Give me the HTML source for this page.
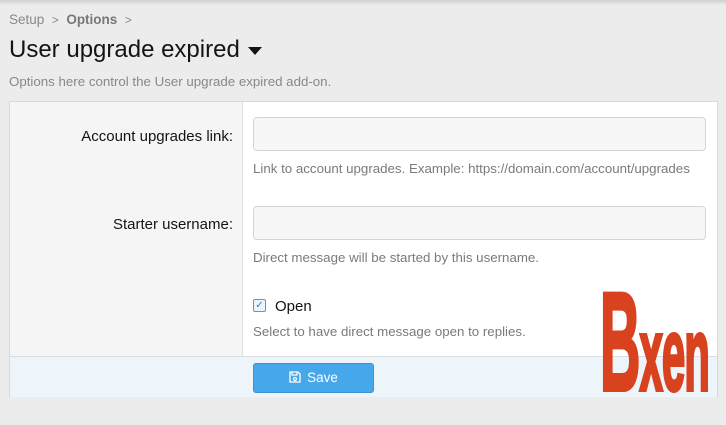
<!DOCTYPE html>
<html><head><style>
body{margin:0;width:726px;height:408px;overflow:hidden;background:#ececec;font-family:"Liberation Sans",Arial,sans-serif;position:relative}
.top{position:absolute;left:0;top:0;width:726px;height:5px;background:linear-gradient(#cfcfcf,#ececec)}
.a{position:absolute}
.panel{position:absolute;left:9px;top:101px;width:707px;height:294px;border:1px solid #d8d8d8;background:#fff}
.left{position:absolute;left:0;top:0;width:232px;height:254px;background:#f5f5f5;border-right:1px solid #e0e0e0}
.foot{position:absolute;left:0;top:254px;width:707px;height:40px;background:#edf4fa;border-top:1px solid #d6dde3}
.lbl{position:absolute;right:484px;font-size:15px;color:#141414;text-align:right}
.inp{position:absolute;left:243px;width:451px;height:32px;border:1px solid #d5d5d5;border-radius:4px;background:#f7f7f7}
.hint{position:absolute;left:243px;font-size:13.3px;color:#7a7a7a}
</style></head><body>
<div class="top"></div>
<div class="a" style="left:9px;top:12px;font-size:13.5px;color:#888">Setup&nbsp;&nbsp;<span style="font-size:12px">&gt;</span>&nbsp;&nbsp;<b style="color:#777">Options</b>&nbsp;&nbsp;<span style="font-size:12px">&gt;</span></div>
<div class="a" style="left:9px;top:36px;font-size:24px;color:#141414">User upgrade expired <span style="display:inline-block;width:0;height:0;border-left:7px solid transparent;border-right:7px solid transparent;border-top:8px solid #141414;vertical-align:middle;margin-left:2px"></span></div>
<div class="a" style="left:9px;top:74px;font-size:13.3px;color:#888">Options here control the User upgrade expired add-on.</div>
<div class="panel">
<div class="left"></div>
<div class="lbl" style="top:26px">Account upgrades link:</div>
<div class="inp" style="top:15px"></div>
<div class="hint" style="top:59px">Link to account upgrades. Example: https://domain.com/account/upgrades</div>
<div class="lbl" style="top:114px">Starter username:</div>
<div class="inp" style="top:104px"></div>
<div class="hint" style="top:148px">Direct message will be started by this username.</div>
<div class="a" style="left:243px;top:197px;width:11px;height:11px;border:1px solid #4a9fd8;border-radius:2px;background:#eaf4fc;font-size:10px;color:#2d82c0;line-height:11px;text-align:center">✓</div>
<div class="a" style="left:265px;top:196px;font-size:15px;color:#141414">Open</div>
<div class="hint" style="top:222px">Select to have direct message open to replies.</div>
<div class="foot">
<div class="a" style="left:243px;top:6px;width:119px;height:28px;background:#47a7eb;border:1px solid #3d93d0;border-radius:3px;color:#fff;font-size:13.5px;line-height:28px;text-align:center">
<svg width="12" height="12" viewBox="0 0 12 12" style="vertical-align:-1px;margin-right:6px"><path d="M1 1h8l2 2v8H1z" fill="none" stroke="#fff" stroke-width="1.3"/><path d="M3 1v3h5V1" fill="none" stroke="#fff" stroke-width="1.2"/><circle cx="6" cy="8" r="1.5" fill="none" stroke="#fff" stroke-width="1.2"/></svg>Save</div>
</div>
</div>
<div class="a" style="left:600px;top:272px;font-size:140px;font-weight:bold;letter-spacing:-2px;transform:scaleX(0.4);transform-origin:left top;color:#d9421f;-webkit-text-stroke:4px #d9421f;font-family:'Liberation Sans Narrow','Liberation Sans',sans-serif;line-height:140px">B<span style="font-size:104px">xen</span></div>
</body></html>
